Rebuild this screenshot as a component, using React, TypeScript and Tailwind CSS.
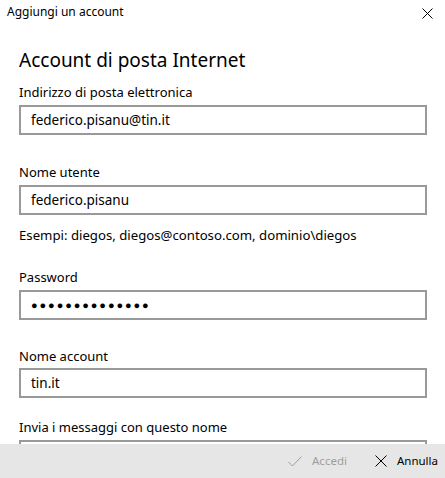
export default function App() {
  const font = { fontFamily: '"Noto Sans", "Open Sans", sans-serif' };

  return (
    <div className="w-[445px] h-[478px] bg-white flex flex-col overflow-hidden text-black" style={font}>
      <div className="flex-1 overflow-hidden">
        <div className="h-[24px] flex items-center justify-between pl-[7px] pr-[12px]">
          <span className="text-[12px] leading-[24px]">Aggiungi un account</span>
          <svg width="11" height="11" viewBox="0 0 11 11" className="mt-[2px]">
            <path d="M0.5 0.5 L10.5 10.5 M10.5 0.5 L0.5 10.5" stroke="#000" strokeWidth="1" />
          </svg>
        </div>

        <div className="px-[19px] pr-[18px]">
          <h1 className="mt-[22px] text-[19px] leading-[28px] font-normal">Account di posta Internet</h1>

          <label className="block mt-[8px] mb-[3px] text-[13px] leading-[20px]">Indirizzo di posta elettronica</label>
          <div className="h-[30px] border-2 border-[#999] flex items-center px-[10px] text-[13.5px]">
            federico.pisanu@tin.it
          </div>

          <label className="block mt-[27px] mb-[3px] text-[13px] leading-[20px]">Nome utente</label>
          <div className="h-[30px] border-2 border-[#999] flex items-center px-[10px] text-[13.5px]">
            federico.pisanu
          </div>
          <p className="mt-[10px] text-[13.2px] leading-[20px]">Esempi: diegos, diegos@contoso.com, dominio\diegos</p>

          <label className="block mt-[22px] mb-[3px] text-[13px] leading-[20px]">Password</label>
          <div className="h-[30px] border-2 border-[#999] flex items-center px-[10px] text-[11px] tracking-[1.9px]">
            ●●●●●●●●●●●●●●
          </div>

          <label className="block mt-[26px] mb-[2px] text-[13px] leading-[20px]">Nome account</label>
          <div className="h-[30px] border-2 border-[#999] flex items-center px-[10px] text-[13.5px]">
            tin.it
          </div>

          <label className="block mt-[19px] mb-[3px] text-[13px] leading-[20px]">Invia i messaggi con questo nome</label>
          <div className="h-[30px] border-2 border-[#999]"></div>
        </div>
      </div>

      <div className="h-[34px] shrink-0 bg-[#e6e6e6] flex items-center justify-end pr-[7px] text-[11.5px]">
        <div className="flex items-center text-[#9e9e9e]">
          <svg width="14" height="11" viewBox="0 0 14 11">
            <path d="M0.5 6 L4.5 10 L13.5 0.5" fill="none" stroke="#9e9e9e" strokeWidth="1" />
          </svg>
          <span className="ml-[10px]">Accedi</span>
        </div>
        <div className="flex items-center ml-[28px]">
          <svg width="12" height="12" viewBox="0 0 12 12">
            <path d="M0.5 0.5 L11.5 11.5 M11.5 0.5 L0.5 11.5" stroke="#000" strokeWidth="1" />
          </svg>
          <span className="ml-[10px]">Annulla</span>
        </div>
      </div>
    </div>
  );
}
